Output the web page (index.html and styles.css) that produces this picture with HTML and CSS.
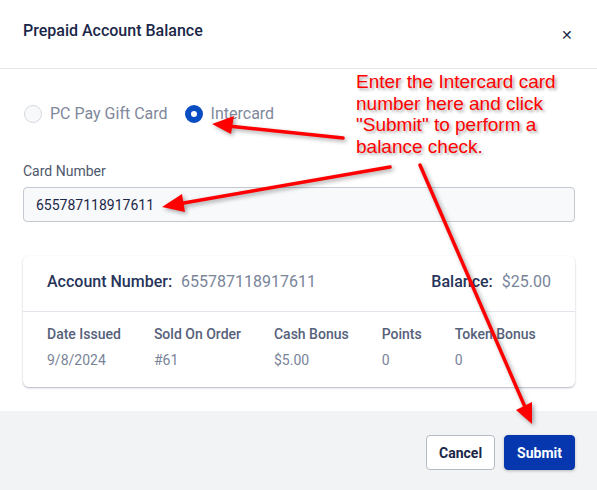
FILE: index.html
```html
<!DOCTYPE html>
<html>
<head>
    <title>Prepaid Account Balance</title>
    <link rel="stylesheet" href="styles.css">
</head>
<body>
    <div class="modal">
        <div class="modal-header">
            <h2 class="modal-title">Prepaid Account Balance</h2>
            <span class="close">&#x2715;</span>
        </div>

        <div class="modal-body">
            <div class="radios">
                <label class="radio"><span class="dot"></span>PC Pay Gift Card</label>
                <label class="radio checked"><span class="dot"></span>Intercard</label>
            </div>

            <div class="field-label">Card Number</div>
            <div class="input">655787118917611</div>

            <div class="result-card">
                <div class="result-top">
                    <div class="pair">
                        <span class="key">Account Number:</span>
                        <span class="val">655787118917611</span>
                    </div>
                    <div class="pair">
                        <span class="key">Balance:</span>
                        <span class="val">$25.00</span>
                    </div>
                </div>
                <div class="result-cols">
                    <div class="col"><div class="col-head">Date Issued</div><div class="col-val">9/8/2024</div></div>
                    <div class="col"><div class="col-head">Sold On Order</div><div class="col-val">#61</div></div>
                    <div class="col"><div class="col-head">Cash Bonus</div><div class="col-val">$5.00</div></div>
                    <div class="col"><div class="col-head">Points</div><div class="col-val">0</div></div>
                    <div class="col"><div class="col-head">Token Bonus</div><div class="col-val">0</div></div>
                </div>
            </div>
        </div>

        <div class="modal-footer">
            <button class="btn btn-cancel">Cancel</button>
            <button class="btn btn-submit">Submit</button>
        </div>
    </div>

    <!-- annotation layer over the dialog -->
    <div class="note">Enter the Intercard card number here and click "Submit" to perform a balance check.</div>
    <svg class="arrows" width="597" height="490" viewBox="0 0 597 490">
        <g stroke="#ff0000" stroke-width="3.5" fill="#ff0000" stroke-linecap="round">
            <line x1="343" y1="138" x2="228" y2="126"/>
            <polygon points="212,124 234,116 231,134" stroke="none"/>
            <line x1="390" y1="167" x2="178" y2="204"/>
            <polygon points="162,207 182,194 185,212" stroke="none"/>
            <line x1="420" y1="165" x2="525" y2="407"/>
            <polygon points="532,424 516,410 532,402" stroke="none"/>
        </g>
    </svg>
</body>
</html>
```

FILE: styles.css
```css
body {
    margin: 0;
    background: #fff;
    font-family: Roboto, "Liberation Sans", sans-serif;
    width: 597px;
    height: 490px;
    overflow: hidden;
    position: relative;
}
.modal {
    display: flex;
    flex-direction: column;
    height: 490px;
}
.modal-header {
    display: flex;
    justify-content: space-between;
    align-items: flex-start;
    padding: 22px 23px 0;
    box-sizing: border-box;
    height: 69px;
    border-bottom: 1px solid #e4e7ec;
}
.modal-title {
    margin: 0;
    font-size: 16px;
    line-height: 18px;
    font-weight: 500;
    color: #1b2748;
}
.close {
    font-size: 14px;
    line-height: 20px;
    margin-top: 3px;
    color: #1b2748;
    margin-right: 1px;
}
.modal-body {
    flex: 1;
    padding: 36px 22px 0 23px;
}
.radios {
    display: flex;
    gap: 16px;
    height: 18px;
}
.radio {
    display: flex;
    align-items: center;
    gap: 8px;
    font-size: 16px;
    line-height: 18px;
    color: #7f889b;
}
.radio .dot {
    width: 16px;
    height: 16px;
    border-radius: 50%;
    border: 1px solid #d5d9e0;
    background: #f8f9fb;
    margin-left: 1px;
}
.radio.checked .dot {
    width: 6px;
    height: 6px;
    border: 6px solid #0a4cc2;
    background: #fff;
}
.field-label {
    margin-top: 39px;
    font-size: 14px;
    line-height: 18px;
    color: #4e586c;
}
.input {
    margin-top: 7px;
    height: 35px;
    box-sizing: border-box;
    padding: 0 12px;
    display: flex;
    align-items: center;
    border: 1px solid #c3c8d1;
    border-radius: 4px;
    background: #f8f9fb;
    font-size: 14px;
    color: #1b2748;
}
.result-card {
    margin-top: 34px;
    border-radius: 6px;
    box-shadow: 0 1px 2px rgba(40, 50, 80, 0.35);
}
.result-top {
    display: flex;
    justify-content: space-between;
    padding: 16px 24px 19px;
    border-bottom: 1px solid #e3e5ec;
    font-size: 16px;
    line-height: 20px;
}
.pair .key {
    font-weight: 500;
    color: #27345a;
    margin-right: 5px;
}
.pair .val {
    color: #7a8499;
}
.result-cols {
    display: flex;
    gap: 33px;
    padding: 13px 24px 18px;
    font-size: 14px;
    line-height: 18px;
}
.col-head {
    font-weight: 500;
    color: #56617a;
}
.col-val {
    margin-top: 8px;
    color: #7a8499;
}
.modal-footer {
    background: #f2f3f5;
    height: 79px;
    display: flex;
    justify-content: flex-end;
    align-items: flex-start;
    gap: 9px;
    padding: 24px 22px 0;
    box-sizing: border-box;
}
.btn {
    height: 35px;
    border-radius: 4px;
    font-family: Roboto, "Liberation Sans", sans-serif;
    font-size: 14px;
    font-weight: 700;
    padding: 0 12px;
}
.btn-cancel {
    background: #fff;
    border: 1px solid #b5bbc6;
    color: #1b2748;
}
.btn-submit {
    background: #0637ae;
    border: 1px solid #0637ae;
    color: #fff;
    box-shadow: 0 1px 3px rgba(0, 0, 0, 0.25);
}
.note {
    position: absolute;
    left: 356px;
    top: 71px;
    width: 210px;
    font-family: "Liberation Sans", Arial, sans-serif;
    font-size: 19px;
    line-height: 21.5px;
    color: #ff0000;
    text-shadow: 2px 2px 3px rgba(0, 0, 0, 0.35);
}
.arrows {
    position: absolute;
    left: 0;
    top: 0;
    filter: drop-shadow(2px 2px 2px rgba(0, 0, 0, 0.35));
}
```
